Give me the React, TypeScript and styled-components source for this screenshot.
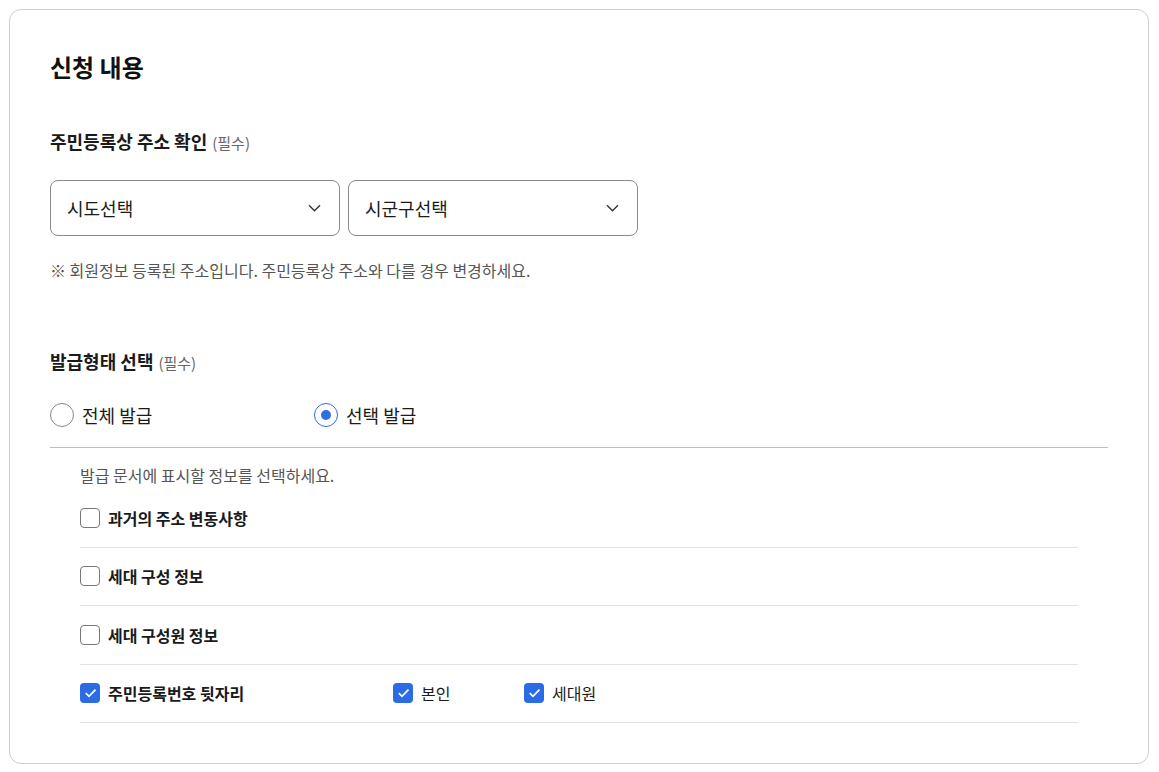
import styled, { createGlobalStyle } from 'styled-components';

const GlobalStyle = createGlobalStyle`
  body {
    margin: 0;
    padding: 9px 10px 9px 9px;
    background: #fff;
    font-family: 'Noto Sans CJK KR', 'Noto Sans', sans-serif;
    color: #222;
  }
`;

const Card = styled.section`
  border: 1px solid #cfcfcf;
  border-radius: 12px;
  padding: 41px 40px 40px;
`;

const Title = styled.h2`
  margin: 0 0 46px;
  font-size: 24px;
  line-height: 32px;
  font-weight: 700;
  color: #111;
`;

const Label = styled.h3`
  margin: 0;
  height: 24px;
  font-size: 18px;
  line-height: 24px;
  font-weight: 700;
  color: #1a1a1a;
`;

const Required = styled.span`
  font-size: 15px;
  line-height: 1;
  font-weight: 400;
  color: #666;
  margin-left: 5px;
`;

const SelectRow = styled.div`
  display: flex;
  gap: 8px;
  margin-top: 27px;
`;

const Select = styled.div`
  width: 290px;
  height: 56px;
  box-sizing: border-box;
  border: 1px solid #8a8a8a;
  border-radius: 8px;
  display: flex;
  align-items: center;
  justify-content: space-between;
  padding: 0 18px 0 16px;
  font-size: 18px;
  color: #1a1a1a;
`;

const Note = styled.p`
  margin: 23px 0 68px;
  height: 22px;
  font-size: 16px;
  line-height: 22px;
  color: #555;
`;

const RadioGroup = styled.div`
  display: flex;
  margin-top: 30px;
  padding-bottom: 20px;
  border-bottom: 1px solid #bdbdbd;
`;

const RadioOption = styled.label`
  display: flex;
  align-items: center;
  gap: 8px;
  width: 264px;
  height: 24px;
  font-size: 18px;
  color: #1a1a1a;
`;

const RadioCircle = styled.span<{ $on?: boolean }>`
  width: 24px;
  height: 24px;
  box-sizing: border-box;
  border-radius: 50%;
  border: 1px solid ${({ $on }) => ($on ? '#2f6fe4' : '#888')};
  display: flex;
  align-items: center;
  justify-content: center;
  &::after {
    content: '';
    width: 10px;
    height: 10px;
    border-radius: 50%;
    background: #2f6fe4;
    display: ${({ $on }) => ($on ? 'block' : 'none')};
  }
`;

const Options = styled.div`
  padding: 16px 30px 0;
`;

const Hint = styled.p`
  margin: 0 0 3px;
  height: 22px;
  font-size: 16px;
  line-height: 22px;
  color: #555;
`;

const Row = styled.div`
  display: flex;
  align-items: center;
  height: 57.5px;
  border-bottom: 1px solid #e2e2e8;
`;

const Check = styled.label<{ $width?: number }>`
  display: flex;
  align-items: center;
  gap: 8px;
  width: ${({ $width }) => ($width ? `${$width}px` : 'auto')};
  font-size: 16px;
  color: #1a1a1a;
`;

const Box = styled.span<{ $on?: boolean }>`
  width: 20px;
  height: 20px;
  box-sizing: border-box;
  border-radius: 4px;
  border: ${({ $on }) => ($on ? 'none' : '1px solid #777')};
  background: ${({ $on }) => ($on ? '#2b6be6' : '#fff')};
  display: flex;
  align-items: center;
  justify-content: center;
`;

const Strong = styled.span`
  font-weight: 700;
`;

const Chevron = () => (
  <svg width="13" height="8" viewBox="0 0 13 8" fill="none">
    <path d="M1 1.2l5.5 5.5L12 1.2" stroke="#333" strokeWidth="1.4" />
  </svg>
);

const Tick = () => (
  <svg width="13" height="10" viewBox="0 0 13 10" fill="none">
    <path d="M1.8 5.2l3.2 3.2L11.5 1.6" stroke="#fff" strokeWidth="1.7" />
  </svg>
);

const items = ['과거의 주소 변동사항', '세대 구성 정보', '세대 구성원 정보'];

const App = () => (
  <>
    <GlobalStyle />
    <Card>
      <Title>신청 내용</Title>
      <Label>
        주민등록상 주소 확인<Required>(필수)</Required>
      </Label>
      <SelectRow>
        <Select>
          시도선택
          <Chevron />
        </Select>
        <Select>
          시군구선택
          <Chevron />
        </Select>
      </SelectRow>
      <Note>※ 회원정보 등록된 주소입니다. 주민등록상 주소와 다를 경우 변경하세요.</Note>
      <Label>
        발급형태 선택<Required>(필수)</Required>
      </Label>
      <RadioGroup>
        <RadioOption>
          <RadioCircle />
          전체 발급
        </RadioOption>
        <RadioOption>
          <RadioCircle $on />
          선택 발급
        </RadioOption>
      </RadioGroup>
      <Options>
        <Hint>발급 문서에 표시할 정보를 선택하세요.</Hint>
        {items.map((item) => (
          <Row key={item}>
            <Check>
              <Box />
              <Strong>{item}</Strong>
            </Check>
          </Row>
        ))}
        <Row>
          <Check $width={313}>
            <Box $on>
              <Tick />
            </Box>
            <Strong>주민등록번호 뒷자리</Strong>
          </Check>
          <Check $width={131}>
            <Box $on>
              <Tick />
            </Box>
            본인
          </Check>
          <Check>
            <Box $on>
              <Tick />
            </Box>
            세대원
          </Check>
        </Row>
      </Options>
    </Card>
  </>
);

export default App;
